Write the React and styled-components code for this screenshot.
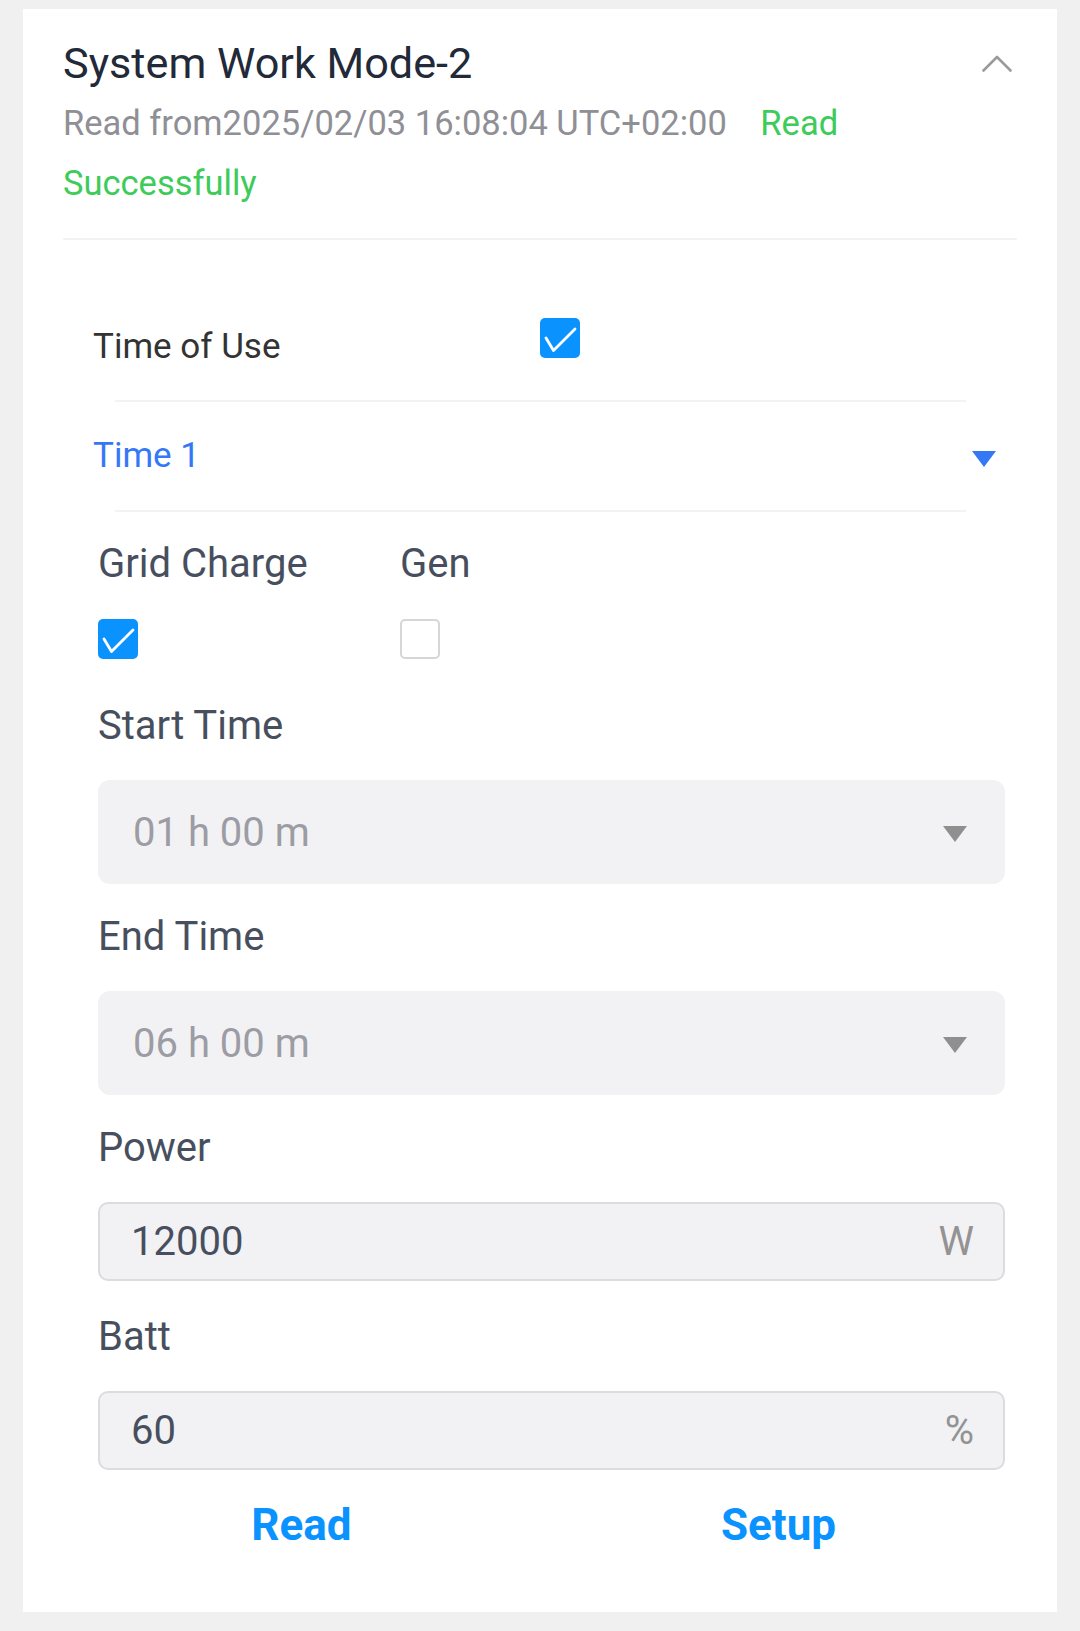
import React from "react";
import styled, { createGlobalStyle } from "styled-components";

const Global = createGlobalStyle`
  html, body { margin: 0; padding: 0; background: #f0f0f0; }
  body { font-family: Roboto, "Noto Sans", "Liberation Sans", sans-serif; }
  * { box-sizing: border-box; }
`;

const Card = styled.section`
  margin: 9px 23px 0;
  background: #ffffff;
  padding: 27px 40px 57px;
`;

const HeaderRow = styled.div`
  display: flex;
  align-items: flex-start;
  justify-content: space-between;
`;

const Title = styled.h2`
  margin: 0;
  font-size: 43.2px;
  line-height: 56px;
  font-weight: 400;
  color: #222938;
`;

const ChevronBtn = styled.div`
  margin-top: 19px;
  margin-right: 5px;
  width: 30px;
  height: 17px;
  display: flex;
`;

const Subtitle = styled.p`
  margin: 1px 0 0;
  font-size: 34.5px;
  line-height: 60px;
  color: #8f8f96;
`;

const Status = styled.span`
  margin-left: 25px;
  color: #3dcb5a;
`;

const Divider = styled.div`
  height: 2px;
  background: #f3f3f3;
  margin: ${(p) => (p.$inset ? "0 51px 0 52px" : "0")};
  margin-top: ${(p) => p.$top || "0"};
`;

const ToggleRow = styled.div`
  display: grid;
  grid-template-columns: 1fr 1fr;
  align-items: start;
  padding: 78px 0 33px;
`;

const RowLabel = styled.div`
  padding-left: 30px;
  margin-top: 9px;
  font-size: 35px;
  line-height: 40px;
  color: ${(p) => p.$color || "#333333"};
`;

const TimeRow = styled.div`
  height: 108px;
  display: flex;
  align-items: center;
  justify-content: space-between;
  padding-right: 21px;
`;

const TimeLabel = styled(RowLabel)`
  margin-top: 0;
`;

const CaretSlot = styled.div`
  display: flex;
  margin-top: ${(p) => p.$top || "0"};
`;

const Form = styled.div`
  padding: 0 12px 0 35px;
  display: flex;
  flex-direction: column;
`;

const CheckGrid = styled.div`
  margin-top: 28px;
  display: grid;
  grid-template-columns: 302px 302px;
  row-gap: 31px;
`;

const FieldLabel = styled.div`
  font-size: 40px;
  line-height: 48px;
  color: #474f5e;
  margin-top: ${(p) => p.$top || "29px"};
  margin-bottom: 30px;
`;

const GridLabel = styled(FieldLabel)`
  margin: 0;
`;

const Box = styled.div`
  width: 40px;
  height: 40px;
  border-radius: 5px;
  background: ${(p) => (p.$checked ? "#0a93ff" : "#ffffff")};
  border: ${(p) => (p.$checked ? "none" : "2px solid #d6d6d6")};
  display: flex;
  align-items: center;
  justify-content: center;
`;

const Select = styled.div`
  height: 104px;
  border-radius: 12px;
  background: #f2f2f4;
  display: flex;
  align-items: center;
  justify-content: space-between;
  padding: 0 38px 0 35px;
  font-size: 40px;
  color: #9c9ca4;
`;

const Input = styled.div`
  height: 79px;
  border-radius: 10px;
  background: #f2f2f4;
  border: 2px solid #dcdcdc;
  display: flex;
  align-items: center;
  justify-content: space-between;
  padding: 0 29px 0 31px;
  font-size: 40px;
  color: #474f5e;
`;

const Unit = styled.span`
  color: #939393;
`;

const ButtonRow = styled.div`
  margin-top: 25px;
  display: grid;
  grid-template-columns: 1fr 1fr;
`;

const ActionButton = styled.button`
  border: none;
  background: none;
  padding: 0;
  font-family: inherit;
  font-size: 44px;
  line-height: 60px;
  font-weight: 700;
  color: #0a93ff;
  text-align: center;
  cursor: pointer;
`;

const Chevron = () => (
  <svg width="30" height="17" viewBox="0 0 30 17">
    <polyline
      points="1.5,15.5 15,2 28.5,15.5"
      fill="none"
      stroke="#9a9a9a"
      strokeWidth="2.6"
      strokeLinecap="round"
      strokeLinejoin="round"
    />
  </svg>
);

const Caret = ({ color }) => (
  <svg width="24" height="16" viewBox="0 0 24 16">
    <polygon points="0,0 24,0 12,16" fill={color} />
  </svg>
);

const CheckBox = ({ checked }) => (
  <Box $checked={checked}>
    {checked && (
      <svg width="40" height="40" viewBox="0 0 40 40">
        <polyline
          points="6,20 13.5,32.5 35,11"
          fill="none"
          stroke="#ffffff"
          strokeWidth="2.8"
          strokeLinecap="round"
          strokeLinejoin="round"
        />
      </svg>
    )}
  </Box>
);

export default function App() {
  return (
    <>
      <Global />
      <Card>
        <HeaderRow>
          <Title>System Work Mode-2</Title>
          <ChevronBtn>
            <Chevron />
          </ChevronBtn>
        </HeaderRow>
        <Subtitle>
          Read from2025/02/03 16:08:04 UTC+02:00 <Status>Read Successfully</Status>
        </Subtitle>
        <Divider $top="25px" />

        <ToggleRow>
          <RowLabel>Time of Use</RowLabel>
          <CheckBox checked />
        </ToggleRow>
        <Divider $inset />
        <TimeRow>
          <TimeLabel $color="#3478f6">Time 1</TimeLabel>
          <CaretSlot $top="6px">
            <Caret color="#3478f6" />
          </CaretSlot>
        </TimeRow>
        <Divider $inset />

        <Form>
          <CheckGrid>
            <GridLabel>Grid Charge</GridLabel>
            <GridLabel>Gen</GridLabel>
            <CheckBox checked />
            <CheckBox />
          </CheckGrid>

          <FieldLabel $top="43px">Start Time</FieldLabel>
          <Select>
            <span>01 h 00 m</span>
            <CaretSlot $top="4px">
              <Caret color="#8f8f8f" />
            </CaretSlot>
          </Select>

          <FieldLabel>End Time</FieldLabel>
          <Select>
            <span>06 h 00 m</span>
            <CaretSlot $top="4px">
              <Caret color="#8f8f8f" />
            </CaretSlot>
          </Select>

          <FieldLabel>Power</FieldLabel>
          <Input>
            <span>12000</span>
            <Unit>W</Unit>
          </Input>

          <FieldLabel $top="32px">Batt</FieldLabel>
          <Input>
            <span>60</span>
            <Unit>%</Unit>
          </Input>
        </Form>

        <ButtonRow>
          <ActionButton>Read</ActionButton>
          <ActionButton>Setup</ActionButton>
        </ButtonRow>
      </Card>
    </>
  );
}
